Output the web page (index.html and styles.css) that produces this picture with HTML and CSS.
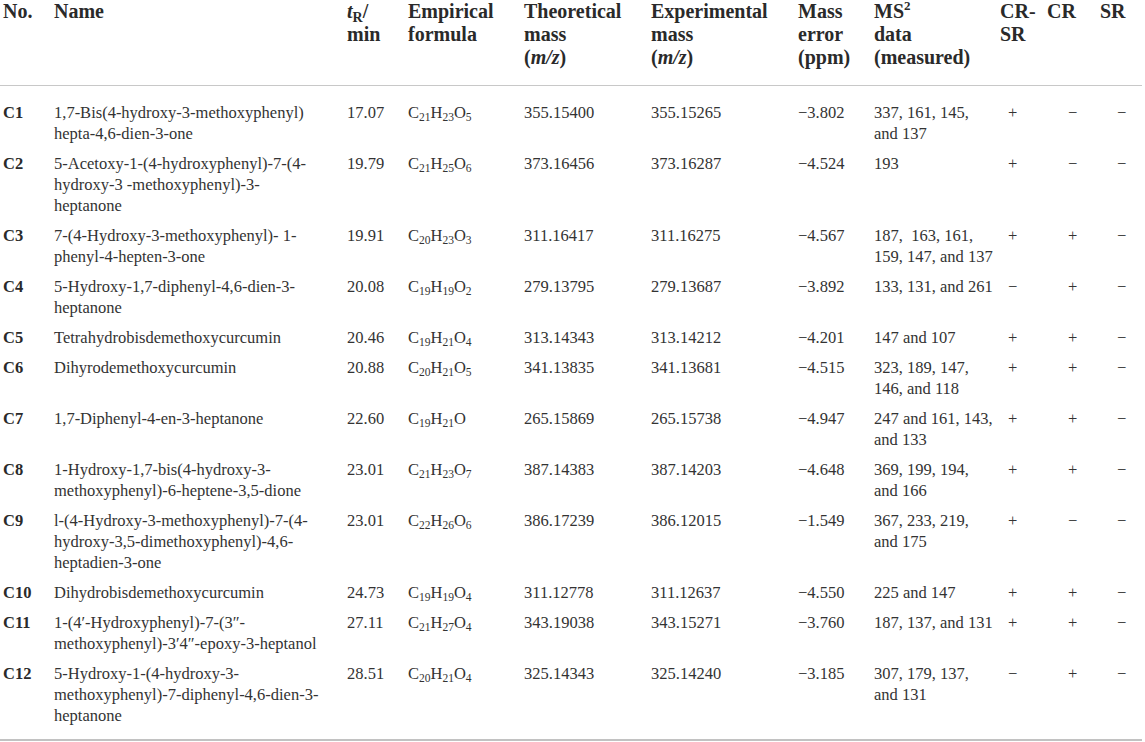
FILE: index.html
```html
<!DOCTYPE html>
<html lang="en">
<head>
<meta charset="utf-8">
<title>Compounds table</title>
<link rel="stylesheet" href="styles.css">
</head>
<body>
<table class="data">
  <colgroup>
    <col class="c-no"><col class="c-name"><col class="c-tr"><col class="c-formula"><col class="c-theo"><col class="c-exp"><col class="c-err"><col class="c-ms"><col class="c-crsr"><col class="c-cr"><col class="c-sr">
  </colgroup>
  <thead>
    <tr>
      <th class="first">No.</th>
      <th>Name</th>
      <th><i>t</i><sub class="hsub">R</sub>/<br>min</th>
      <th>Empirical<br>formula</th>
      <th>Theoretical<br>mass<br>(<i>m/z</i>)</th>
      <th>Experimental<br>mass<br>(<i>m/z</i>)</th>
      <th>Mass<br>error<br>(ppm)</th>
      <th>MS<sup class="hsup">2</sup><br>data<br>(measured)</th>
      <th>CR-<br>SR</th>
      <th>CR</th>
      <th>SR</th>
    </tr>
  </thead>
  <tbody>
    <tr class="r-first">
      <td class="first id">C1</td>
      <td>1,7-Bis(4-hydroxy-3-methoxyphenyl)<br>hepta-4,6-dien-3-one</td>
      <td>17.07</td>
      <td>C<sub>21</sub>H<sub>23</sub>O<sub>5</sub></td>
      <td>355.15400</td>
      <td>355.15265</td>
      <td>−3.802</td>
      <td>337, 161, 145,<br>and 137</td>
      <td class="pm crsr">+</td>
      <td class="pm cr">−</td>
      <td class="pm sr">−</td>
    </tr>
    <tr>
      <td class="first id">C2</td>
      <td>5-Acetoxy-1-(4-hydroxyphenyl)-7-(4-<br>hydroxy-3 -methoxyphenyl)-3-<br>heptanone</td>
      <td>19.79</td>
      <td>C<sub>21</sub>H<sub>25</sub>O<sub>6</sub></td>
      <td>373.16456</td>
      <td>373.16287</td>
      <td>−4.524</td>
      <td>193</td>
      <td class="pm crsr">+</td>
      <td class="pm cr">−</td>
      <td class="pm sr">−</td>
    </tr>
    <tr>
      <td class="first id">C3</td>
      <td>7-(4-Hydroxy-3-methoxyphenyl)- 1-<br>phenyl-4-hepten-3-one</td>
      <td>19.91</td>
      <td>C<sub>20</sub>H<sub>23</sub>O<sub>3</sub></td>
      <td>311.16417</td>
      <td>311.16275</td>
      <td>−4.567</td>
      <td>187, &nbsp;163, 161,<br>159, 147, and 137</td>
      <td class="pm crsr">+</td>
      <td class="pm cr">+</td>
      <td class="pm sr">−</td>
    </tr>
    <tr>
      <td class="first id">C4</td>
      <td>5-Hydroxy-1,7-diphenyl-4,6-dien-3-<br>heptanone</td>
      <td>20.08</td>
      <td>C<sub>19</sub>H<sub>19</sub>O<sub>2</sub></td>
      <td>279.13795</td>
      <td>279.13687</td>
      <td>−3.892</td>
      <td>133, 131, and 261</td>
      <td class="pm crsr">−</td>
      <td class="pm cr">+</td>
      <td class="pm sr">−</td>
    </tr>
    <tr>
      <td class="first id">C5</td>
      <td>Tetrahydrobisdemethoxycurcumin</td>
      <td>20.46</td>
      <td>C<sub>19</sub>H<sub>21</sub>O<sub>4</sub></td>
      <td>313.14343</td>
      <td>313.14212</td>
      <td>−4.201</td>
      <td>147 and 107</td>
      <td class="pm crsr">+</td>
      <td class="pm cr">+</td>
      <td class="pm sr">−</td>
    </tr>
    <tr>
      <td class="first id">C6</td>
      <td>Dihyrodemethoxycurcumin</td>
      <td>20.88</td>
      <td>C<sub>20</sub>H<sub>21</sub>O<sub>5</sub></td>
      <td>341.13835</td>
      <td>341.13681</td>
      <td>−4.515</td>
      <td>323, 189, 147,<br>146, and 118</td>
      <td class="pm crsr">+</td>
      <td class="pm cr">+</td>
      <td class="pm sr">−</td>
    </tr>
    <tr>
      <td class="first id">C7</td>
      <td>1,7-Diphenyl-4-en-3-heptanone</td>
      <td>22.60</td>
      <td>C<sub>19</sub>H<sub>21</sub>O</td>
      <td>265.15869</td>
      <td>265.15738</td>
      <td>−4.947</td>
      <td>247 and 161, 143,<br>and 133</td>
      <td class="pm crsr">+</td>
      <td class="pm cr">+</td>
      <td class="pm sr">−</td>
    </tr>
    <tr>
      <td class="first id">C8</td>
      <td>1-Hydroxy-1,7-bis(4-hydroxy-3-<br>methoxyphenyl)-6-heptene-3,5-dione</td>
      <td>23.01</td>
      <td>C<sub>21</sub>H<sub>23</sub>O<sub>7</sub></td>
      <td>387.14383</td>
      <td>387.14203</td>
      <td>−4.648</td>
      <td>369, 199, 194,<br>and 166</td>
      <td class="pm crsr">+</td>
      <td class="pm cr">+</td>
      <td class="pm sr">−</td>
    </tr>
    <tr>
      <td class="first id">C9</td>
      <td>l-(4-Hydroxy-3-methoxyphenyl)-7-(4-<br>hydroxy-3,5-dimethoxyphenyl)-4,6-<br>heptadien-3-one</td>
      <td>23.01</td>
      <td>C<sub>22</sub>H<sub>26</sub>O<sub>6</sub></td>
      <td>386.17239</td>
      <td>386.12015</td>
      <td>−1.549</td>
      <td>367, 233, 219,<br>and 175</td>
      <td class="pm crsr">+</td>
      <td class="pm cr">−</td>
      <td class="pm sr">−</td>
    </tr>
    <tr>
      <td class="first id">C10</td>
      <td>Dihydrobisdemethoxycurcumin</td>
      <td>24.73</td>
      <td>C<sub>19</sub>H<sub>19</sub>O<sub>4</sub></td>
      <td>311.12778</td>
      <td>311.12637</td>
      <td>−4.550</td>
      <td>225 and 147</td>
      <td class="pm crsr">+</td>
      <td class="pm cr">+</td>
      <td class="pm sr">−</td>
    </tr>
    <tr>
      <td class="first id">C11</td>
      <td>1-(4′-Hydroxyphenyl)-7-(3″-<br>methoxyphenyl)-3′4″-epoxy-3-heptanol</td>
      <td>27.11</td>
      <td>C<sub>21</sub>H<sub>27</sub>O<sub>4</sub></td>
      <td>343.19038</td>
      <td>343.15271</td>
      <td>−3.760</td>
      <td>187, 137, and 131</td>
      <td class="pm crsr">+</td>
      <td class="pm cr">+</td>
      <td class="pm sr">−</td>
    </tr>
    <tr class="r-last">
      <td class="first id">C12</td>
      <td>5-Hydroxy-1-(4-hydroxy-3-<br>methoxyphenyl)-7-diphenyl-4,6-dien-3-<br>heptanone</td>
      <td>28.51</td>
      <td>C<sub>20</sub>H<sub>21</sub>O<sub>4</sub></td>
      <td>325.14343</td>
      <td>325.14240</td>
      <td>−3.185</td>
      <td>307, 179, 137,<br>and 131</td>
      <td class="pm crsr">−</td>
      <td class="pm cr">+</td>
      <td class="pm sr">−</td>
    </tr>
  </tbody>
</table>
</body>
</html>
```

FILE: styles.css
```css
html, body {
  margin: 0;
  padding: 0;
  background: #ffffff;
}

body {
  font-family: "Liberation Serif", "Times New Roman", serif;
  color: #333333;
}

.data {
  width: 1142px;
  border-collapse: collapse;
  table-layout: fixed;
  border-bottom: 2px solid #c2c2c2;
}

.c-no { width: 54px; }
.c-name { width: 293px; }
.c-tr { width: 61px; }
.c-formula { width: 116px; }
.c-theo { width: 127px; }
.c-exp { width: 147px; }
.c-err { width: 76px; }
.c-ms { width: 126px; }
.c-crsr { width: 47px; }
.c-cr { width: 53px; }
.c-sr { width: 42px; }

.data th {
  font-size: 20px;
  line-height: 23px;
  font-weight: bold;
  color: #2a2a2a;
  text-align: left;
  vertical-align: top;
  padding: 0 2px 16px 0;
  border-bottom: 1px solid #c8c8c8;
  white-space: nowrap;
}

.data td {
  font-size: 16.5px;
  line-height: 21px;
  text-align: left;
  vertical-align: top;
  padding: 5px 2px 4px 0;
  white-space: nowrap;
}

.data .first {
  padding-left: 3px;
}

.data .r-first td {
  padding-top: 16px;
}

.data .r-last td {
  padding-bottom: 13px;
}

.id {
  font-weight: bold;
  color: #2a2a2a;
}

.data .pm.crsr {
  padding-left: 8px;
}

.data .pm.cr {
  padding-left: 21px;
}

.data .pm.sr {
  padding-left: 17px;
}

sub, sup {
  font-size: 11.5px;
  line-height: 0;
}

sub {
  vertical-align: -3px;
}

.hsub {
  font-size: 14px;
  vertical-align: -4px;
}

.hsup {
  font-size: 13px;
  vertical-align: 8px;
}
```
